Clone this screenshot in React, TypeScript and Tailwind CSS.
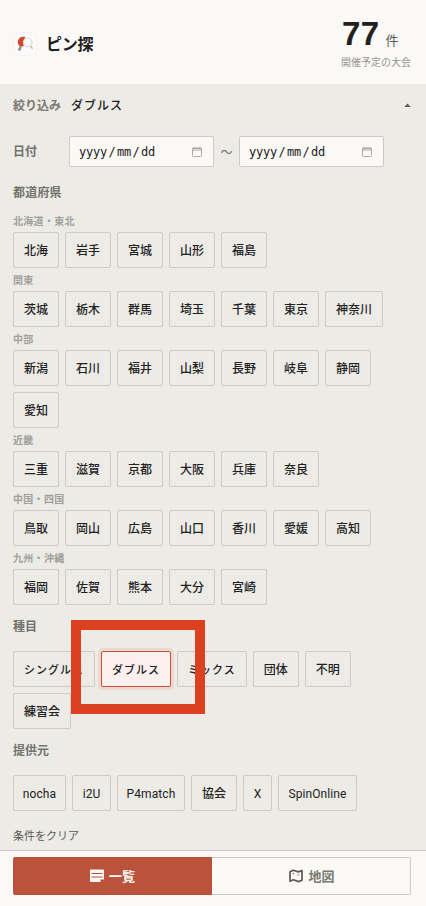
import clsx from "clsx";

const regions = [
  { name: "北海道・東北", items: ["北海", "岩手", "宮城", "山形", "福島"] },
  { name: "関東", items: ["茨城", "栃木", "群馬", "埼玉", "千葉", "東京", "神奈川"] },
  { name: "中部", items: ["新潟", "石川", "福井", "山梨", "長野", "岐阜", "静岡", "愛知"] },
  { name: "近畿", items: ["三重", "滋賀", "京都", "大阪", "兵庫", "奈良"] },
  { name: "中国・四国", items: ["鳥取", "岡山", "広島", "山口", "香川", "愛媛", "高知"] },
  { name: "九州・沖縄", items: ["福岡", "佐賀", "熊本", "大分", "宮崎"] },
];

const events = [
  { name: "シングルス", kana: true },
  { name: "ダブルス", kana: true },
  { name: "ミックス", kana: true },
  { name: "団体" },
  { name: "不明" },
  { name: "練習会" },
];

const latin = "font-[Roboto,sans-serif] font-normal pt-px tracking-[0.1px]";

const sources = [
  { name: "nocha", className: clsx("w-[53px]", latin) },
  { name: "i2U", className: clsx("w-[39px]", latin) },
  { name: "P4match", className: clsx("w-[68px]", latin) },
  { name: "協会", className: "w-[46px] font-medium" },
  { name: "X", className: clsx("w-[29px]", latin) },
  { name: "SpinOnline", className: clsx("w-[79px]", latin) },
];

function Chip({ label, active, className }: { label: string; active?: boolean; className?: string }) {
  return (
    <button
      className={clsx(
        "flex h-9 items-center justify-center whitespace-nowrap rounded-[2px] border text-[#22211e]",
        active ? "border-[#bd533c] bg-[#fbf0ed] shadow-[0_0_0_3px_#ead9cc]" : "border-[#cbcac4]",
        className ?? "px-[10px] font-medium"
      )}
    >
      {label}
    </button>
  );
}

function DateField() {
  return (
    <div className="flex h-[31px] w-[145px] items-center justify-between rounded-[2px] border border-[#cbcac4] bg-[#faf9f5] pr-[11px] pl-[9px]">
      <div className="flex font-['DejaVu_Sans_Mono',monospace] text-xs tracking-[-0.22px] text-[#22211e]">
        <span>yyyy</span>
        <span className="px-[1.5px]">/</span>
        <span>mm</span>
        <span className="px-[1.5px]">/</span>
        <span>dd</span>
      </div>
      <svg width="10" height="10" viewBox="0 0 10 10" fill="none">
        <rect x="0.5" y="1" width="9" height="8.5" rx="1" stroke="#aaa9a4" />
        <path d="M0.5 1.5h9v1.5h-9zM2 0v2M8 0v2" stroke="#aaa9a4" />
      </svg>
    </div>
  );
}

function Logo() {
  return (
    <svg width="24" height="24" viewBox="0 0 24 24" fill="none">
      <rect x="0.5" y="0.5" width="23" height="23" rx="5" fill="#fcfbf9" stroke="#f4f3ef" />
      <path d="M7.6 14.8 6 18.5" stroke="#858ba8" strokeWidth="2.6" />
      <path d="M12.5 5.2C9 4 5 6 4.8 10c0 2 .8 3.6 2.8 4.5 1.2.4 2.2-.1 3.2-.8-1.4-3.2-.5-6 1.7-8.5Z" fill="#cf4930" />
      <circle cx="14.8" cy="10.4" r="4.2" fill="#fbfafa" stroke="#dedbdb" strokeWidth="1.1" />
      <path d="m17.4 14 2.2 2.8" stroke="#cdbfbd" strokeWidth="1.6" />
    </svg>
  );
}

export default function App() {
  return (
    <div className="flex h-[906px] w-full flex-col bg-[#ecebe6] font-['Noto_Sans_CJK_JP',sans-serif] text-[#22211e]">
      <header className="flex h-[84px] shrink-0 justify-between bg-[#faf9f5] pr-[15px] pl-[13px]">
        <div className="flex items-center gap-[9px] pt-[4px]">
          <Logo />
          <h1 className="-mt-[2px] text-base leading-6 font-bold tracking-[-0.3px]">ピン探</h1>
        </div>
        <div className="pt-[14px]">
          <div className="flex items-baseline gap-[6px] pl-[1px]">
            <span className="font-['Liberation_Sans',sans-serif] text-[33px] leading-[39px] font-bold tracking-[0.4px]">77</span>
            <span className="text-[13px] leading-5 text-[#5b5a55]">件</span>
          </div>
          <p className="mt-px text-[10px] leading-[15px] text-[#96958f]">開催予定の大会</p>
        </div>
      </header>

      <main className="relative min-h-0 flex-1 px-[13px]">
        <div className="flex h-[42px] items-center justify-between">
          <div className="flex gap-[10px] text-xs">
            <span className="font-bold text-[#7a7974]">絞り込み</span>
            <span className="font-medium tracking-[1px]">ダブルス</span>
          </div>
          <svg width="7" height="4" viewBox="0 0 7 4" className="mr-[2px]">
            <path d="M0.3 4 3.5 0.4 6.7 4Z" fill="#5b5a55" />
          </svg>
        </div>

        <div className="mt-[10px] flex items-center">
          <span className="-mt-[2px] w-14 text-xs font-bold text-[#73726d]">日付</span>
          <DateField />
          <span className="w-[25px] text-center text-xs text-[#6b6a65]">〜</span>
          <DateField />
        </div>

        <h2 className="mt-[16px] h-[18px] text-xs leading-[18px] font-bold tracking-[0.2px] text-[#73726d]">都道府県</h2>
        <div className="mt-[8px]">
          {regions.map((region) => (
            <section key={region.name}>
              <h3 className="flex h-[23px] items-center text-[10px] font-bold tracking-[0.3px] text-[#a09f99]">{region.name}</h3>
              <div className="flex flex-wrap gap-1.5 text-xs">
                {region.items.map((item) => (
                  <Chip key={item} label={item} />
                ))}
              </div>
            </section>
          ))}
        </div>

        <h2 className="mt-[12px] mb-[16px] h-[18px] text-xs leading-[18px] font-bold text-[#73726d]">種目</h2>
        <div className="flex flex-wrap gap-1.5 text-xs">
          {events.map((item) => (
            <Chip
              key={item.name}
              label={item.name}
              active={item.name === "ダブルス"}
              className={item.kana ? "px-[10px] text-[11px] font-medium tracking-[1px]" : undefined}
            />
          ))}
        </div>

        <h2 className="mt-[12px] mb-[16px] h-[18px] text-xs leading-[18px] font-bold text-[#73726d]">提供元</h2>
        <div className="flex gap-1.5 text-xs">
          {sources.map((item) => (
            <Chip key={item.name} label={item.name} className={item.className} />
          ))}
        </div>
        <button className="mt-[16px] block text-[11px] leading-4 text-[#5b5a55]">条件をクリア</button>

        {/* highlight frame over the event chips */}
        <div className="pointer-events-none absolute top-[536px] left-[71px] h-[94px] w-[134px] border-[10px] border-[#db401f]" />
      </main>

      <nav className="flex h-14 shrink-0 border-t border-[#cbcac4] bg-[#faf9f5] pt-[6px] pr-[15px] pl-[13px] text-[13px] font-bold">
        <button className="flex h-[38px] w-[199px] items-center justify-center gap-[5px] rounded-l-[2px] bg-[#bb533c] text-[#faf9f5]">
          <svg width="14" height="14" viewBox="0 0 14 14">
            <path d="M1 0.5h12q1 0 1 1v9h-3.5V13H1q-1 0-1-1V1.5q0-1 1-1Z" fill="#faf9f5" />
            <path d="M1.5 4.5h11M1.5 8h11" stroke="#bb533c" />
          </svg>
          一覧
        </button>
        <button className="flex h-[38px] flex-1 items-center justify-center gap-[5px] rounded-r-[2px] border border-l-0 border-[#cbcac4] text-[#7a7974]">
          <svg width="14" height="14" viewBox="0 0 14 14" fill="none" stroke="#5b5a55" strokeWidth="1.7" className="ml-[2px]">
            <path d="M1 2.8 4.4 1.3l5 1.6 3.6-1.3v9.6l-3.6 1.4-5-1.8L1 12.2Z" strokeLinejoin="round" />
            <path d="M4.4 4v1.3M9.2 5.2v1.4" strokeWidth="1.1" />
          </svg>
          地図
        </button>
      </nav>
    </div>
  );
}
